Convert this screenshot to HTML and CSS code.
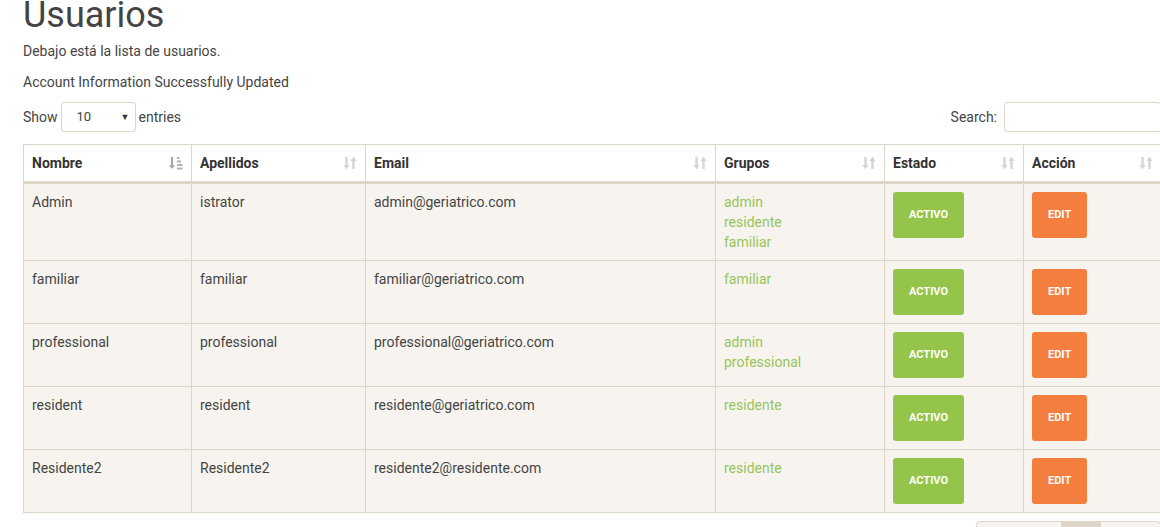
FILE: index.html
```html
<!DOCTYPE html>
<html lang="es">
<head>
<meta charset="utf-8">
<title>Usuarios</title>
<link rel="stylesheet" href="styles.css">
</head>
<body>
<div class="page">
  <h1 class="title">Usuarios</h1>
  <p class="lead">Debajo está la lista de usuarios.</p>
  <p class="msg">Account Information Successfully Updated</p>

  <div class="controls">
    <label class="length">Show
      <span class="select"><span>10</span><span class="caret">&#9660;</span></span>
      entries</label>
    <label class="search">Search: <span class="input"></span></label>
  </div>

  <table class="users">
    <colgroup>
      <col style="width:168px"><col style="width:174px"><col style="width:350px">
      <col style="width:169px"><col style="width:139px"><col style="width:138px">
    </colgroup>
    <thead>
      <tr>
        <th>Nombre
          <svg class="sort" width="14" height="14" viewBox="0 0 14 14"><path d="M3 1v9" stroke="#a9a9a9" stroke-width="2.2"/><path d="M0 9l3 4 3-4z" fill="#a9a9a9"/><rect x="8" y="1" width="2.5" height="2" fill="#b3b3b3"/><rect x="8" y="4.5" width="4" height="2" fill="#b3b3b3"/><rect x="8" y="8" width="5.5" height="2" fill="#b3b3b3"/><rect x="8" y="11.5" width="5.5" height="2" fill="#b3b3b3"/></svg>
        </th>
        <th>Apellidos <svg class="sort" width="14" height="14" viewBox="0 0 14 14"><path d="M3.5 1v9" stroke="#d4d4d4" stroke-width="2.4"/><path d="M0.5 9l3 4.5 3-4.5z" fill="#d4d4d4"/><path d="M10.5 13V4" stroke="#d4d4d4" stroke-width="2.4"/><path d="M7.5 5l3-4.5 3 4.5z" fill="#d4d4d4"/></svg></th>
        <th>Email <svg class="sort" width="14" height="14" viewBox="0 0 14 14"><path d="M3.5 1v9" stroke="#d4d4d4" stroke-width="2.4"/><path d="M0.5 9l3 4.5 3-4.5z" fill="#d4d4d4"/><path d="M10.5 13V4" stroke="#d4d4d4" stroke-width="2.4"/><path d="M7.5 5l3-4.5 3 4.5z" fill="#d4d4d4"/></svg></th>
        <th>Grupos <svg class="sort" width="14" height="14" viewBox="0 0 14 14"><path d="M3.5 1v9" stroke="#d4d4d4" stroke-width="2.4"/><path d="M0.5 9l3 4.5 3-4.5z" fill="#d4d4d4"/><path d="M10.5 13V4" stroke="#d4d4d4" stroke-width="2.4"/><path d="M7.5 5l3-4.5 3 4.5z" fill="#d4d4d4"/></svg></th>
        <th>Estado <svg class="sort" width="14" height="14" viewBox="0 0 14 14"><path d="M3.5 1v9" stroke="#d4d4d4" stroke-width="2.4"/><path d="M0.5 9l3 4.5 3-4.5z" fill="#d4d4d4"/><path d="M10.5 13V4" stroke="#d4d4d4" stroke-width="2.4"/><path d="M7.5 5l3-4.5 3 4.5z" fill="#d4d4d4"/></svg></th>
        <th>Acción <svg class="sort" width="14" height="14" viewBox="0 0 14 14"><path d="M3.5 1v9" stroke="#d4d4d4" stroke-width="2.4"/><path d="M0.5 9l3 4.5 3-4.5z" fill="#d4d4d4"/><path d="M10.5 13V4" stroke="#d4d4d4" stroke-width="2.4"/><path d="M7.5 5l3-4.5 3 4.5z" fill="#d4d4d4"/></svg></th>
      </tr>
    </thead>
    <tbody>
      <tr>
        <td>Admin</td><td>istrator</td><td>admin@geriatrico.com</td>
        <td class="groups">admin<br>residente<br>familiar</td>
        <td><span class="btn btn-active">ACTIVO</span></td>
        <td><span class="btn btn-edit">EDIT</span></td>
      </tr>
      <tr>
        <td>familiar</td><td>familiar</td><td>familiar@geriatrico.com</td>
        <td class="groups">familiar</td>
        <td><span class="btn btn-active">ACTIVO</span></td>
        <td><span class="btn btn-edit">EDIT</span></td>
      </tr>
      <tr>
        <td>professional</td><td>professional</td><td>professional@geriatrico.com</td>
        <td class="groups">admin<br>professional</td>
        <td><span class="btn btn-active">ACTIVO</span></td>
        <td><span class="btn btn-edit">EDIT</span></td>
      </tr>
      <tr>
        <td>resident</td><td>resident</td><td>residente@geriatrico.com</td>
        <td class="groups">residente</td>
        <td><span class="btn btn-active">ACTIVO</span></td>
        <td><span class="btn btn-edit">EDIT</span></td>
      </tr>
      <tr>
        <td>Residente2</td><td>Residente2</td><td>residente2@residente.com</td>
        <td class="groups">residente</td>
        <td><span class="btn btn-active">ACTIVO</span></td>
        <td><span class="btn btn-edit">EDIT</span></td>
      </tr>
    </tbody>
  </table>

  <div class="pager">
    <ul class="pagination">
      <li class="prev">Previous</li>
      <li class="current">1</li>
      <li class="next">Next</li>
    </ul>
  </div>
</div>
</body>
</html>
```

FILE: styles.css
```css
html, body {
  margin: 0;
  padding: 0;
  overflow: hidden;
  background: #fff;
}
body {
  font-family: Roboto, "Liberation Sans", sans-serif;
  font-size: 14px;
  line-height: 20px;
  color: #444;
}
.page {
  width: 1138px;
  padding-left: 23px;
}
.title {
  font-size: 36px;
  line-height: 40px;
  font-weight: 400;
  color: #444;
  margin: -5px 0 6px;
}
.lead {
  margin: 0 0 11px;
}
.msg {
  margin: 0 0 10px;
}
.controls {
  display: flex;
  justify-content: space-between;
  align-items: center;
  height: 30px;
  margin-bottom: 12px;
}
.length, .search {
  display: flex;
  align-items: center;
  gap: 3px;
}
.select {
  display: flex;
  justify-content: space-between;
  align-items: center;
  box-sizing: border-box;
  width: 75px;
  height: 30px;
  padding: 0 5px 0 15px;
  border: 1px solid #ddd5c8;
  border-radius: 3px;
  font-size: 13px;
  color: #444;
}
.caret {
  font-size: 9px;
  color: #333;
}
.search {
  gap: 7px;
}
.input {
  display: block;
  box-sizing: border-box;
  width: 157px;
  height: 30px;
  border: 1px solid #ddd5c8;
  border-radius: 3px;
}
.users {
  width: 1138px;
  table-layout: fixed;
  border-collapse: collapse;
  border: 1px solid #ddd5c8;
}
.users th {
  position: relative;
  text-align: left;
  font-weight: 700;
  color: #333;
  background: #fff;
  padding: 8px;
  line-height: 20px;
  border: 1px solid #ddd5c8;
  border-bottom: 3px solid #ddd5c8;
}
.sort {
  position: absolute;
  right: 8px;
  top: 11px;
}
.users td {
  vertical-align: top;
  padding: 8px;
  line-height: 20px;
  background: #f7f4ef;
  border: 1px solid #ddd5c8;
  color: #444;
}
.users td.groups {
  color: #97c459;
}
.btn {
  display: inline-block;
  height: 46px;
  line-height: 46px;
  padding: 0 16px;
  border-radius: 3px;
  font-size: 11px;
  font-weight: 700;
  color: #fff;
  vertical-align: top;
}
.btn-active {
  background: #94c44a;
}
.btn-edit {
  background: #f47e3e;
}
.pager {
  display: flex;
  justify-content: flex-end;
  margin-top: 8px;
}
.pagination {
  display: flex;
  list-style: none;
  margin: 0;
  padding: 0;
  border: 1px solid #ddd5c8;
  border-radius: 4px;
  overflow: hidden;
  background: #f7f4ef;
}
.pagination li {
  padding: 7px 12px;
  line-height: 20px;
  color: #999;
}
.pagination .prev {
  width: 60px;
}
.pagination .current {
  width: 16px;
  background: #ddd5c8;
  color: #444;
}
.pagination .next {
  width: 35px;
}
```
